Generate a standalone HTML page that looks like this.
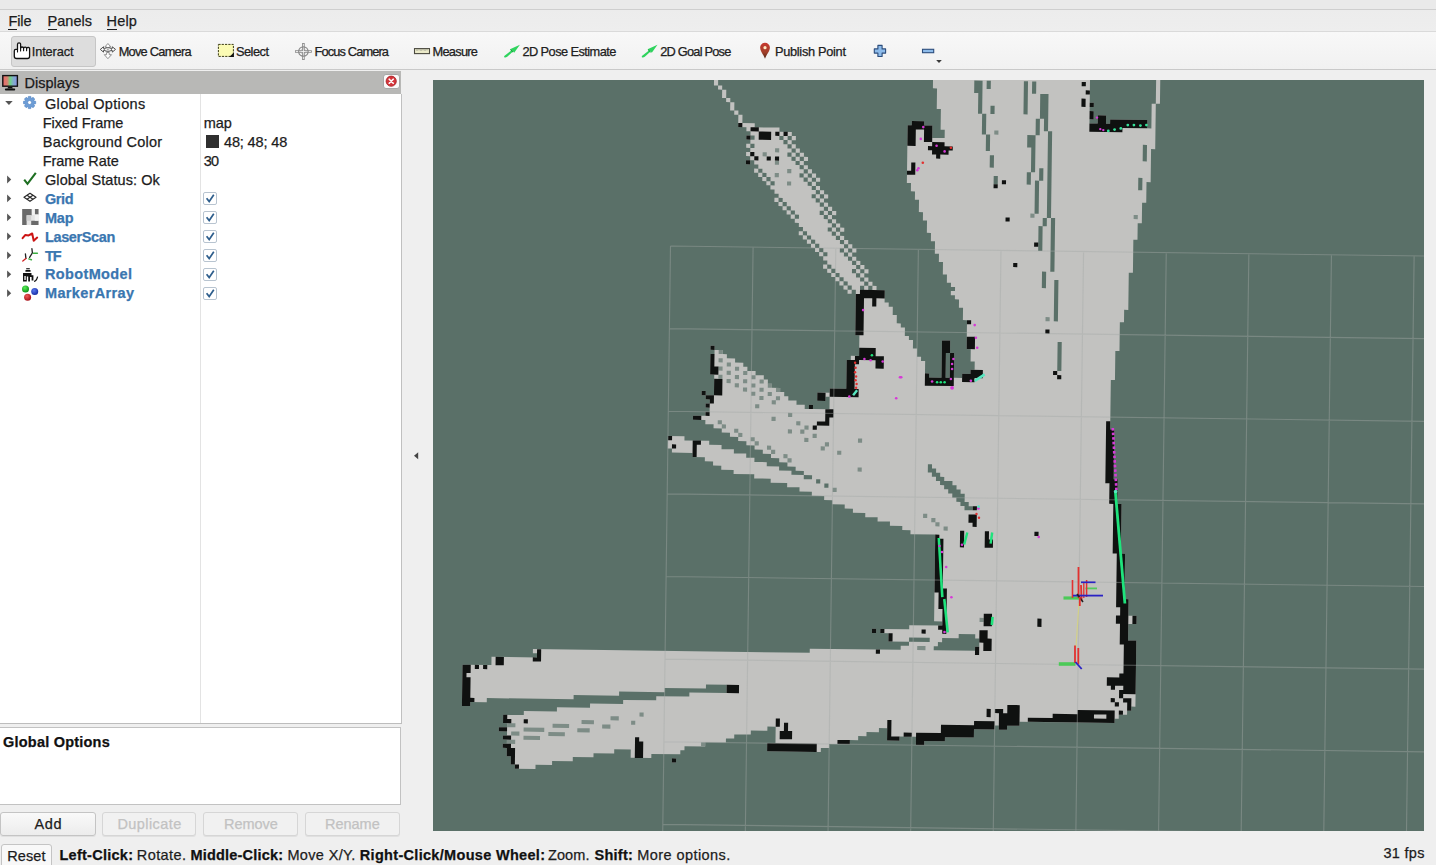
<!DOCTYPE html>
<html><head><meta charset="utf-8"><title>RViz</title>
<style>
html,body{margin:0;padding:0;}
body{width:1436px;height:865px;overflow:hidden;background:#efefef;position:relative;
 font-family:"Liberation Sans",sans-serif;}
.t{position:absolute;white-space:nowrap;line-height:20px;height:20px;-webkit-text-stroke:0.25px currentColor;}
.a{position:absolute;}
.btn{position:absolute;box-sizing:border-box;border:1px solid #c4c4c4;border-radius:3px;
 background:linear-gradient(#f9f9f9,#ececec);box-shadow:0 1px 0 #e0e0e0;}
.cb{position:absolute;box-sizing:border-box;width:14px;height:13px;left:203px;border:1px solid #b8c4d0;border-radius:2px;background:#fff;}
u{text-decoration:none;border-bottom:1.5px solid #1c1c1c;}
</style></head>
<body>
<div class="a" style="left:0;top:0;width:1436px;height:9px;background:#eaeaea"></div>
<div class="a" style="left:0;top:9px;width:1436px;height:1px;background:#cfcfcf"></div>
<div class="a" style="left:0;top:10px;width:1436px;height:21px;background:linear-gradient(#ececec,#eeeeee)"></div>
<div class="a" style="left:0;top:31px;width:1436px;height:1px;background:#dadada"></div>
<div class="a" style="left:0;top:32px;width:1436px;height:37px;background:linear-gradient(#f8f8f8,#f1f1f1)"></div>
<div class="a" style="left:0;top:69px;width:1436px;height:1px;background:#c9c9c9"></div>
<div class="t" style="left:8.40px;top:11.33px;font-size:14.5px;letter-spacing:0.000px;color:#1c1c1c;letter-spacing:-0.1px;"><u>F</u>ile</div>
<div class="t" style="left:47.60px;top:11.33px;font-size:14.5px;letter-spacing:0.000px;color:#1c1c1c;letter-spacing:0;"><u>P</u>anels</div>
<div class="t" style="left:106.50px;top:11.33px;font-size:14.5px;letter-spacing:0.000px;color:#1c1c1c;letter-spacing:0.2px;"><u>H</u>elp</div>
<div class="a" style="left:11px;top:36px;width:85px;height:30.5px;box-sizing:border-box;border:1px solid #c6c6c6;border-radius:3px;background:#dddddd"></div>
<div class="t" style="left:31.80px;top:42.31px;font-size:12.8px;letter-spacing:-0.141px;color:#202020;">Interact</div>
<div class="t" style="left:118.70px;top:42.31px;font-size:12.8px;letter-spacing:-0.748px;color:#202020;">Move Camera</div>
<div class="t" style="left:236.00px;top:42.31px;font-size:12.8px;letter-spacing:-0.515px;color:#202020;">Select</div>
<div class="t" style="left:314.50px;top:42.31px;font-size:12.8px;letter-spacing:-0.858px;color:#202020;">Focus Camera</div>
<div class="t" style="left:432.50px;top:42.31px;font-size:12.8px;letter-spacing:-0.717px;color:#202020;">Measure</div>
<div class="t" style="left:522.40px;top:42.31px;font-size:12.8px;letter-spacing:-0.563px;color:#202020;">2D Pose Estimate</div>
<div class="t" style="left:660.30px;top:42.31px;font-size:12.8px;letter-spacing:-0.790px;color:#202020;">2D Goal Pose</div>
<div class="t" style="left:775.00px;top:42.31px;font-size:12.8px;letter-spacing:-0.310px;color:#202020;">Publish Point</div>
<div class="a" style="left:0;top:71px;width:401px;height:22.5px;background:#b8b8b6"></div>
<div class="t" style="left:24.60px;top:73.13px;font-size:14.5px;letter-spacing:0.001px;color:#1a1a1a;">Displays</div>
<div class="a" style="left:0;top:93.5px;width:401px;height:629.5px;background:#fff;border-right:1px solid #c0c0c0;border-bottom:1px solid #bdbdbd"></div>
<div class="a" style="left:200px;top:93.5px;width:1px;height:629.5px;background:#e3e3e3"></div>
<div class="a" style="left:383px;top:73.5px;width:16.5px;height:15.5px;box-sizing:border-box;border:1px solid #a8a8a8;border-radius:3px;background:#fafafa"></div>
<div class="t" style="left:45.00px;top:93.93px;font-size:14.5px;letter-spacing:0.330px;color:#1c1c1c;">Global Options</div>
<div class="t" style="left:42.80px;top:112.88px;font-size:14.5px;letter-spacing:-0.088px;color:#1c1c1c;">Fixed Frame</div>
<div class="t" style="left:42.80px;top:131.83px;font-size:14.5px;letter-spacing:0.209px;color:#1c1c1c;">Background Color</div>
<div class="t" style="left:42.80px;top:150.78px;font-size:14.5px;letter-spacing:-0.072px;color:#1c1c1c;">Frame Rate</div>
<div class="t" style="left:45.00px;top:169.73px;font-size:14.5px;letter-spacing:0.073px;color:#1c1c1c;">Global Status: Ok</div>
<div class="t" style="left:45.00px;top:188.68px;font-size:14.5px;letter-spacing:-0.436px;color:#3a76b0;font-weight:bold;">Grid</div>
<div class="t" style="left:45.00px;top:207.63px;font-size:14.5px;letter-spacing:-0.251px;color:#3a76b0;font-weight:bold;">Map</div>
<div class="t" style="left:45.00px;top:226.58px;font-size:14.5px;letter-spacing:-0.381px;color:#3a76b0;font-weight:bold;">LaserScan</div>
<div class="t" style="left:45.00px;top:245.53px;font-size:14.5px;letter-spacing:-1.115px;color:#3a76b0;font-weight:bold;">TF</div>
<div class="t" style="left:45.00px;top:264.48px;font-size:14.5px;letter-spacing:0.360px;color:#3a76b0;font-weight:bold;">RobotModel</div>
<div class="t" style="left:45.00px;top:283.43px;font-size:14.5px;letter-spacing:0.356px;color:#3a76b0;font-weight:bold;">MarkerArray</div>
<div class="t" style="left:203.70px;top:112.88px;font-size:14.5px;letter-spacing:-0.004px;color:#1c1c1c;">map</div>
<div class="t" style="left:224.00px;top:131.83px;font-size:14.5px;letter-spacing:-0.144px;color:#1c1c1c;">48; 48; 48</div>
<div class="t" style="left:203.70px;top:150.78px;font-size:14.5px;letter-spacing:-0.829px;color:#1c1c1c;">30</div>
<div class="a" style="left:206px;top:135.3px;width:13px;height:12.5px;background:#2f2f2f"></div>
<div class="cb" style="top:191.9px"><svg width="12" height="11" viewBox="0 0 12 11" style="position:absolute;left:0;top:0"><path d="M2.6 5.2 L5.2 8.6 L9.8 1.8" fill="none" stroke="#2d5d8c" stroke-width="1.7"/></svg></div>
<div class="cb" style="top:210.9px"><svg width="12" height="11" viewBox="0 0 12 11" style="position:absolute;left:0;top:0"><path d="M2.6 5.2 L5.2 8.6 L9.8 1.8" fill="none" stroke="#2d5d8c" stroke-width="1.7"/></svg></div>
<div class="cb" style="top:229.8px"><svg width="12" height="11" viewBox="0 0 12 11" style="position:absolute;left:0;top:0"><path d="M2.6 5.2 L5.2 8.6 L9.8 1.8" fill="none" stroke="#2d5d8c" stroke-width="1.7"/></svg></div>
<div class="cb" style="top:248.8px"><svg width="12" height="11" viewBox="0 0 12 11" style="position:absolute;left:0;top:0"><path d="M2.6 5.2 L5.2 8.6 L9.8 1.8" fill="none" stroke="#2d5d8c" stroke-width="1.7"/></svg></div>
<div class="cb" style="top:267.8px"><svg width="12" height="11" viewBox="0 0 12 11" style="position:absolute;left:0;top:0"><path d="M2.6 5.2 L5.2 8.6 L9.8 1.8" fill="none" stroke="#2d5d8c" stroke-width="1.7"/></svg></div>
<div class="cb" style="top:286.7px"><svg width="12" height="11" viewBox="0 0 12 11" style="position:absolute;left:0;top:0"><path d="M2.6 5.2 L5.2 8.6 L9.8 1.8" fill="none" stroke="#2d5d8c" stroke-width="1.7"/></svg></div>
<div class="a" style="left:0;top:727px;width:401px;height:77.5px;box-sizing:border-box;background:#fff;border:1px solid #c2c2c2;border-left:none"></div>
<div class="t" style="left:3.00px;top:731.63px;font-size:14.5px;letter-spacing:0.214px;color:#111;font-weight:bold;">Global Options</div>
<div class="btn" style="left:0.4px;top:811.5px;width:95.3px;height:24px;"></div>
<div class="t" style="left:34.50px;top:814.13px;font-size:14.5px;letter-spacing:0.650px;color:#1c1c1c;">Add</div>
<div class="btn" style="left:102.4px;top:811.5px;width:94.0px;height:24px;border-color:#d6d6d6;background:#f1f1f1;"></div>
<div class="t" style="left:117.40px;top:814.13px;font-size:14.5px;letter-spacing:0.431px;color:#c2c2c2;">Duplicate</div>
<div class="btn" style="left:203px;top:811.5px;width:94.7px;height:24px;border-color:#d6d6d6;background:#f1f1f1;"></div>
<div class="t" style="left:224.00px;top:814.13px;font-size:14.5px;letter-spacing:-0.039px;color:#c2c2c2;">Remove</div>
<div class="btn" style="left:304.8px;top:811.5px;width:95.1px;height:24px;border-color:#d6d6d6;background:#f1f1f1;"></div>
<div class="t" style="left:325.00px;top:814.13px;font-size:14.5px;letter-spacing:-0.022px;color:#c2c2c2;">Rename</div>
<div class="btn" style="left:1px;top:843.5px;width:51.2px;height:30px;background:#f8f8f8"></div>
<div class="t" style="left:7.30px;top:845.53px;font-size:14.5px;letter-spacing:0.080px;color:#1c1c1c;">Reset</div>
<div class="t" style="left:59.50px;top:844.93px;font-size:14.5px;letter-spacing:0.260px;color:#111;font-weight:bold;">Left-Click:</div>
<div class="t" style="left:136.80px;top:844.93px;font-size:14.5px;letter-spacing:0.408px;color:#1c1c1c;">Rotate.</div>
<div class="t" style="left:190.50px;top:844.93px;font-size:14.5px;letter-spacing:0.189px;color:#111;font-weight:bold;">Middle-Click:</div>
<div class="t" style="left:287.40px;top:844.93px;font-size:14.5px;letter-spacing:0.360px;color:#1c1c1c;">Move X/Y.</div>
<div class="t" style="left:359.80px;top:844.93px;font-size:14.5px;letter-spacing:0.311px;color:#111;font-weight:bold;">Right-Click/Mouse Wheel:</div>
<div class="t" style="left:547.90px;top:844.93px;font-size:14.5px;letter-spacing:0.152px;color:#1c1c1c;">Zoom.</div>
<div class="t" style="left:594.50px;top:844.93px;font-size:14.5px;letter-spacing:0.251px;color:#111;font-weight:bold;">Shift:</div>
<div class="t" style="left:637.30px;top:844.93px;font-size:14.5px;letter-spacing:0.429px;color:#1c1c1c;">More options.</div>
<div class="t" style="left:1383.40px;top:842.63px;font-size:14.5px;letter-spacing:0.320px;color:#1c1c1c;">31 fps</div>
<svg class="a" style="left:412px;top:450px" width="8" height="12" viewBox="0 0 8 12"><path d="M6.2 2.3 L2 5.8 L6.2 9.3 Z" fill="#444"/></svg>
<svg class="a" style="left:0;top:0;pointer-events:none" width="1436" height="865" viewBox="0 0 1436 865">
<g transform="translate(13.6 42.4)" fill="#fff" stroke="#111" stroke-width="1.3" stroke-linejoin="round" stroke-linecap="round"><path d="M3.9 7V2a1.55 1.55 0 0 1 3.1 0V5.9a1.5 1.3 0 0 1 3 0a1.5 1.3 0 0 1 3 .2a1.5 1.3 0 0 1 3 .5V13.8Q16 16.1 13.8 16.1H3Q.7 16.1 .7 13.8V8.6Q.7 7 2.2 7Z"/><path d="M7 5.9V8.6M10 5.9V8.4M13 6.1V8.4M3.9 7V9.6" fill="none" stroke-width="1.1"/></g>
<g transform="translate(99.9 43.1)" stroke-width="1" stroke-linejoin="round"><path d="M8 .4L11 3.8H9.3V6H6.7V3.8H5Z M8 15.6L11.6 11.6H9.3V9.4H6.7V11.6H4.4Z" fill="#fff" stroke="#909090"/><path d="M.4 6.3L3.6 3.7V5.3H6.2V7.4H3.6V9Z M15.6 6.3L12.4 3.7V5.3H9.8V7.4H12.4V9Z" fill="#fff" stroke="#4c4c4c"/><ellipse cx="8" cy="6.4" rx="3.6" ry="1.9" fill="#f4f4f4" stroke="#555"/><circle cx="8" cy="6.4" r="1" fill="#aaa" stroke="none"/></g>
<rect x="218.4" y="44.4" width="15" height="12" fill="#fbfbb4" stroke="#3c3c14" stroke-width="1" stroke-dasharray="2.2 1.1"/>
<path d="M233.9 52.6V56.9H229.2Z" fill="#111"/>
<g transform="translate(303.4 51.5)" fill="none"><path d="M-8.4 0H8.4M0 -8.4V8.4" stroke="#8a8a8a" stroke-width="2.6"/><path d="M-7.6 0H7.6M0 -7.6V7.6" stroke="#f4f4f4" stroke-width="0.9"/><circle r="4.7" stroke="#868686" stroke-width="1.2"/><circle r="2.7" stroke="#9a9a9a" stroke-width="1" stroke-dasharray="1.2 0.9"/></g>
<rect x="414.5" y="48.6" width="15" height="5" fill="#ecebca" stroke="#4b4a40" stroke-width="1.1"/>
<path d="M417 49.2V51M419 49.2V50.4M421 49.2V51M423 49.2V50.4M425 49.2V51M427 49.2V50.4" stroke="#8a8a80" stroke-width="0.8"/>
<g transform="translate(504.0 44.6)"><path d="M.3 12.6Q-.3 11.6 .9 10.8L7 6.2L6 4.6L15.9 .2L10.2 8.2L9 6.9L3.2 12.2Q1.4 13.4 .3 12.6Z" fill="#2fd45e"/><path d="M6.6 5.2L9 7.6" stroke="#1a9a3c" stroke-width="1"/></g>
<g transform="translate(641.6 44.6)"><path d="M.3 12.6Q-.3 11.6 .9 10.8L7 6.2L6 4.6L15.9 .2L10.2 8.2L9 6.9L3.2 12.2Q1.4 13.4 .3 12.6Z" fill="#2fd45e"/><path d="M6.6 5.2L9 7.6" stroke="#1a9a3c" stroke-width="1"/></g>
<defs><linearGradient id="pin" x1="0" y1="0" x2="0" y2="1"><stop offset="0" stop-color="#c8392f"/><stop offset=".6" stop-color="#a2402a"/><stop offset="1" stop-color="#4a2414"/></linearGradient><linearGradient id="scr" x1="0" y1="0" x2="1" y2="0"><stop offset="0" stop-color="#e86a6a"/><stop offset=".3" stop-color="#d88070"/><stop offset=".5" stop-color="#6fd484"/><stop offset=".7" stop-color="#80b0c8"/><stop offset="1" stop-color="#8a8ee6"/></linearGradient><radialGradient id="sg" cx=".4" cy=".35" r=".7"><stop offset="0" stop-color="#58f058"/><stop offset="1" stop-color="#0a8a14"/></radialGradient><radialGradient id="sb" cx=".4" cy=".35" r=".7"><stop offset="0" stop-color="#5a7af0"/><stop offset="1" stop-color="#1228a0"/></radialGradient><radialGradient id="sr" cx=".4" cy=".35" r=".7"><stop offset="0" stop-color="#f05a5a"/><stop offset="1" stop-color="#a40c14"/></radialGradient></defs>
<path d="M765 58.8C763.6 54.6 760.1 51.6 760.1 47.6A4.9 4.9 0 0 1 769.9 47.6C769.9 51.6 766.4 54.6 765 58.8Z" fill="url(#pin)"/>
<circle cx="765" cy="47.7" r="1.6" fill="#ffe9c4"/>
<path d="M877.9 45.4H882.1V48.9H885.6V53.1H882.1V56.5H877.9V53.1H874.3V48.9H877.9Z" fill="#8dbbea" stroke="#2c4d7c" stroke-width="1.1" stroke-linejoin="round"/>
<rect x="922.5" y="49.3" width="11.2" height="3.4" fill="#8dbbea" stroke="#2c4d7c" stroke-width="1.1"/>
<path d="M936.2 60.1H941.8L939 62.9Z" fill="#3a3a3a"/>
<rect x="2.8" y="75.6" width="14.6" height="10.6" fill="url(#scr)" stroke="#111" stroke-width="1.4"/>
<path d="M8 87H12.2L12.8 88.6H7.4Z" fill="#111"/><rect x="4.9" y="88.6" width="10.3" height="1.8" rx=".9" fill="#111"/>
<circle cx="391.2" cy="81.2" r="5.1" fill="#d4353b" stroke="#a32025" stroke-width=".8"/><path d="M389.2 79.2L393.2 83.2M393.2 79.2L389.2 83.2" stroke="#fff" stroke-width="1.6" stroke-linecap="round"/>
<path d="M5.2 101.1H12.7L8.95 105Z" fill="#555"/>
<path d="M7.1 175.6L11.2 179.5L7.1 183.4Z" fill="#555"/>
<path d="M7.1 194.5L11.2 198.4L7.1 202.3Z" fill="#555"/>
<path d="M7.1 213.5L11.2 217.4L7.1 221.3Z" fill="#555"/>
<path d="M7.1 232.4L11.2 236.3L7.1 240.2Z" fill="#555"/>
<path d="M7.1 251.4L11.2 255.3L7.1 259.2Z" fill="#555"/>
<path d="M7.1 270.4L11.2 274.2L7.1 278.1Z" fill="#555"/>
<path d="M7.1 289.3L11.2 293.2L7.1 297.1Z" fill="#555"/>
<path d="M35.68 101.27L35.68 103.73L33.95 103.99L33.73 104.52L34.77 105.93L33.03 107.67L31.62 106.63L31.09 106.85L30.83 108.58L28.37 108.58L28.11 106.85L27.58 106.63L26.17 107.67L24.43 105.93L25.47 104.52L25.25 103.99L23.52 103.73L23.52 101.27L25.25 101.01L25.47 100.48L24.43 99.07L26.17 97.33L27.58 98.37L28.11 98.15L28.37 96.42L30.83 96.42L31.09 98.15L31.62 98.37L33.03 97.33L34.77 99.07L33.73 100.48L33.95 101.01Z M31.60 102.5A2 2 0 1 0 27.60 102.5A2 2 0 1 0 31.60 102.5Z" fill="#6d9dd6" fill-rule="evenodd" stroke="#4f82c0" stroke-width=".6"/>
<path d="M24.2 179.6L27.5 183.8L35.8 172.8" fill="none" stroke="#1e6f22" stroke-width="2.1" stroke-linejoin="miter"/>
<g fill="none" stroke="#2a2a2a" stroke-width="1.2" stroke-linejoin="round"><path d="M24 197.3L30 193.3L36 197.3L30 201.3Z"/><path d="M27 195.3L33 199.3M33 195.3L27 199.3"/></g>
<g><rect x="22.2" y="209" width="16.3" height="16" fill="#e4e4e4"/><path d="M22.2 209H31.8V215.3H26.6V225H22.2Z M34.8 209H38.5V214.6H34.8Z M31.2 220.8H38.5V225H31.2Z" fill="#6a6a6a"/><path d="M26.6 215.3H31.2V220.8H26.6Z" fill="#cfcfcf"/><path d="M31.8 209H34.8V215H31.8Z M34.8 214.6H38.5V220.8H34.8Z" fill="#f2f2f2"/></g>
<path d="M22.6 238.2L25.4 234.9L28.6 235.4L32.2 233.5L33.7 240.8L37.2 237.6" fill="none" stroke="#cc1414" stroke-width="2" stroke-linejoin="round" stroke-linecap="round"/>
<g fill="none" stroke-width="1.3" stroke-linecap="round"><path d="M31.9 248.7L32.4 252.8L29.6 257.4M25.4 253.8L25.9 258.4" stroke="#222"/><path d="M25.9 258.4L22.8 261" stroke="#d02020"/><path d="M33.4 253.3H37.4M28.8 258.9L31.4 259.8" stroke="#3cb040" stroke-width="1.5"/></g>
<g fill="#111" stroke="none"><rect x="26.2" y="268.2" width="3.6" height="1.1"/><rect x="25.4" y="270.1" width="5.2" height="1.6" rx=".5"/><path d="M23 273H31.5V275.2H33.4V280.6H31.6V277H30V281.6H28.2V276.4H26.8V281.6H23Z"/><path d="M34 281.4Q36.6 281 37.6 276.6" fill="none" stroke="#111" stroke-width="1.2"/></g><rect x="24.4" y="276" width="1.3" height="4" fill="#fff"/>
<circle cx="25.5" cy="288.9" r="3.5" fill="url(#sg)"/><circle cx="34.7" cy="291.5" r="3.5" fill="url(#sb)"/><circle cx="27.6" cy="297.2" r="3.5" fill="url(#sr)"/>
</svg>
<svg class="a" style="left:433px;top:80px" width="991" height="751" viewBox="433 80 991 751">
<rect x="433" y="80" width="991" height="751" fill="#5a7068"/>
<g transform="translate(670.5 246.0) rotate(0.76) scale(4.1315)">
<path fill="#c2c2c0" d="M63 -43h38v7h1v1h-1v1h1v2h-1v1h2v-2h2v2h1v-1h9v2h1v-6h1v11h-1v8h-1v5h-1v5h-1v4h-1v8h-1v9h-1v3h-1v7h-1v7h-1v12h1v12h1v6h1v12h1v11h1v4h2v2h-2v4h2v16h-1v1h-1v1h-2v1h-1v1h-23v1h-3v1h-2v-1h-1v1h-5v2h-7v1h-5v1h-2v-2h-4v1h-3v-3h-2v1h-3v1h-2v1h-2v1h-5v1h-2v1h-13v-2h2v-4h-2v1h-4v1h-4v1h-2v1h-5v1h-5v1h-1v1h-7v1h-5v-2h-4v1h-5v1h-5v1h-5v1h-4v1h-5v-1h-1v-2h-1v-2h-1v-1h1v-1h-1v-1h1v-1h-2v-1h2v-1h-1v-2h5v-1h8v-1h8v-1h8v-1h8v-1h8v-1h9v-2h-5v1h-10v1h-11v1h-11v1h-21v1h-4v1h-2v-10h7v-2h11v-1h-1v-1h67v-1h22v-1h2v-1h5v-1h-5v1h-5v-2h-2v-1h7v-1h8v-1h-2v-21h-6v-1h-2v-1h-3v-1h-3v-1h-3v-1h-3v-1h-2v-1h-3v-1h-2v-1h-3v-1h-3v-1h-3v-1h-4v-1h-4v-1h-5v-1h-3v-1h-2v-1h-2v-1h-3v-1h-5v-1h-1v-3h4v1h6v1h3v1h3v1h3v1h2v1h3v1h3v1h3v1h3v1h2v-1h-2v-1h-2v-1h-2v-1h-2v-1h-2v-1h-2v-1h-2v-1h-2v-1h-2v-1h-2v-1h-2v-1h-2v-1h-2v-1h-3v-1h3v-1h1v-1h-1v-1h1v-1h-1v-1h2v-5h-1v-5h1v-1h2v1h1v1h2v1h2v1h1v1h2v1h2v1h1v1h1v1h2v1h1v1h1v1h2v1h2v1h1v-1h1v1h4v-3h-1v1h-2v-2h3v-1h4v-7h1v-1h2v-5h-1v-11h-1v1h-1v-1h1v-1h-1v1h-1v-1h1v-1h-1v1h-1v-1h1v-1h-1v1h-1v-1h1v-1h-1v1h-1v-1h1v-1h-1v1h-1v-1h1v-1h-1v1h-1v-1h1v-1h-1v-1h1v-1h-1v1h-1v-1h1v-1h-1v1h-1v-1h1v-1h-1v1h-1v-1h1v-1h-1v1h-1v-1h1v-1h-1v1h-1v-1h1v-1h-1v1h-1v-1h1v-1h-1v-1h-1v-1h1v-1h-1v1h-1v-1h1v-1h-1v1h-1v-1h1v-1h-1v1h-1v-1h1v-1h-1v1h-1v-1h1v-1h-1v1h-1v-1h1v-1h-1v-1h-1v-1h1v-1h-1v1h-1v-1h1v-1h-1v1h-1v-1h1v-1h-1v1h-1v-1h1v-1h-1v1h-1v-1h1v-1h-1v-1h-1v1h-1v-1h1v-1h-1v-1h1v-1h1v-1h-1v1h-1v-1h1v-1h1v-1h-1v1h-1v-1h1v-1h-1v-1h-2v-3h1v2h3v1h6v1h3v1h1v1h-1v1h1v1h1v1h1v1h1v1h-1v1h1v1h1v1h1v1h1v1h-1v1h1v1h1v1h1v1h-1v1h1v1h1v1h1v1h-1v1h1v1h1v1h1v1h-1v1h1v1h1v1h1v1h1v1h-1v1h1v1h1v1h1v1h1v1h-1v1h1v1h1v1h1v1h2v3h1v1h1v2h1v2h1v1h1v2h1v1h1v2h1v2h1v1h1v3h1v1h3v-9h2v3h1v6h2v-1h2v-1h1v-2h-1v-3h-1v-7h-1v-3h-1v-2h-1v-1h-1v-1h1v-1h-1v-1h-1v-2h-1v-3h-1v-2h-1v-3h-1v-2h-1v-3h-1v-2h-1v-3h-1v-2h-1v-2h-1v-14h1v-1h3v1h2v3h3v-2h-1v-5h-1v-5h-1zM117 -43h1v7h-1zM73 -41v3h1v5h1v5h1v4h1v-4h-1v-5h-1v-8zM77 -41h-1v2h1zM86 -41h-1v8h1zM88 -41h-1v3h1zM10 -41h1v2h1v1h1v2h1v1h1v2h1v1h-1v-1h-1v-2h-1v-1h-1v-2h-1v-1h-1zM89 -38v6h1v3h1v21h1v13h1v-13h-1v-21h-1v-9zM78 -35h-1v2h1zM89 -32h-1v4h1zM86 -28v3h1v6h1v-9zM27 -27h-1v1h1v1h1v1h1v1h1v1h1v1h1v-1h-1v-1h-1v-1h-1v-1h-1v-1h1v-1h-1v1h-1zM115 -26h-1v4h1zM29 -23h-1v1h1v1h1v1h1v1h1v1h1v1h1v1h1v-1h-1v-1h-1v-1h-1v-1h-1v-1h-1v-1h-1zM78 -23h-1v3h1zM90 -20h-1v3h1zM87 -19h-1v3h1zM32 -18h-1v1h1v1h1v1h1v1h1v1h1v1h1v-1h-1v-1h-1v-1h-1v-1h-1v-1h-1zM79 -18h-1v2h1zM114 -18h-1v3h1zM89 -17h-1v8h1zM35 -13h-1v1h1v1h1v1h1v1h1v1h1v-1h-1v-1h-1v-1h-1v-1h-1zM37 -9h-1v1h1v1h1v1h1v1h1v1h1v-1h-1v-1h-1v-1h-1v-1h-1zM91 -8h-1v2h1zM90 -6h-1v6h1zM39 -5h-1v1h1v1h1v1h1v1h1v1h1v1h1v-1h-1v-1h-1v-1h-1v-1h-1v-1h-1zM42 0h-1v1h1v1h1v1h1v1h1v1h1v1h1v-1h-1v-1h-1v-1h-1v-1h-1v-1h-1zM45 5h-1v1h1v1h1v1h1v1h1v1h1v-1h-1v-1h-1v-1h-1v-1h-1zM91 5h-1v4h1zM94 7h-1v10h1zM47 9h-1v1h1zM95 22h-1v7h1zM10 24h1v1h-1zM68 25h-1v6h1zM8 35h1v1h-1zM64 52h-1v2h1v1h1v1h1v1h1v1h1v1h1v1h1v1h1v1h1v1h2v-1h-1v-1h-1v-2h-1v-1h-1v-1h-1v-1h-2v-1h-1v-1h-1v-1h-1zM37 56h-1v1h1zM39 57h-1v1h1zM50 92h1v1h-1zM71 93v1h-4v1h-1v1h-1v1h10v-1h1v-2h-1v-1zM2 124h1v1h-1z"/>
<path fill="#7d8c86" d="M78 -29h1v1h-1zM25 -24h1v1h-1zM22 -23h1v1h-1zM25 -21h1v1h-1zM28 -19h1v1h-1zM25 -18h1v1h-1zM28 -16h1v1h-1zM87 -9h1v1h-1zM112 -9h1v1h-1zM91 16h1v1h-1zM12 25h1v1h-1zM12 27h1v1h-1zM14 28h1v1h-1zM12 29h1v1h-1zM16 29h1v1h-1zM14 30h1v1h-1zM18 30h1v1h-1zM12 31h1v1h-1zM16 31h1v1h-1zM20 31h1v1h-1zM14 32h1v1h-1zM18 32h1v1h-1zM22 32h1v1h-1zM16 33h1v1h-1zM20 33h1v1h-1zM24 33h1v1h-1zM18 34h1v1h-1zM22 34h1v1h-1zM26 34h1v1h-1zM20 35h1v1h-1zM24 35h1v1h-1zM22 36h1v1h-1zM26 36h1v1h-1v1h-1v-1h1zM21 38h1v1h-1zM29 40h1v1h-1zM25 41h1v1h-1zM12 42h1v1h1v1h-1v-1h-1zM31 42h1v1h-1zM33 43h1v1h-1v1h-1v-1h1zM16 44h1v1h1v1h-1v-1h-1zM29 44h1v1h-1zM35 45h1v1h-1zM20 46h1v1h1v1h-1v-1h-1zM33 46h1v1h-1zM46 46h1v1h-1zM38 47h1v1h-1v1h-1v-1h1zM24 48h1v1h1v1h-1v-1h-1zM41 49h1v1h-1zM28 50h1v1h1v1h-1v-1h-1zM46 53h1v1h-1zM40 58h1v1h-1zM62 64h1v1h-1zM64 65h1v1h1v1h-1v-1h-1zM67 67h1v1h-1zM76 89h1v1h-1zM61 96h2v1h-2zM-6 113h1v1h-1zM-13 114h2v1h-2zM-20 115h3v1h-3zM-8 115h1v1h-1zM-38 116h2v1h-2zM-27 116h4v1h-4zM-15 116h2v1h-2zM-34 117h5v1h-5zM-21 117h3v1h-3zM-37 118h2v1h-2zM-28 118h4v1h-4zM-34 119h4v1h-4zM-38 120h2v1h-2zM9 120h1v1h-1z"/>
<path fill="#0f1110" d="M99 -41h1v1h-1zM100 -39h1v1h-1zM99 -37h1v2h-1zM101 -36h1v1h-1zM101 -34h1v2h-1zM103 -33h2v2h1v-1h9v2h-6v1h-8v-2h2zM58 -31h3v1h2v4h3v1h2v1h-1v1h-2v1h-1v-1h-1v-1h-1v-1h1v-1h-2v-3h-2v4h-2v-5h1zM16 -30h1v1h-1zM19 -29h2v1h3v2h-3v-2h-2zM25 -28h1v1h-1zM27 -28h1v1h-1zM18 -27h1v1h-1zM19 -23h1v1h1v1h-1v-1h-1zM23 -22h1v1h-1zM25 -22h1v1h-1zM18 -21h1v1h-1zM58 -21h1v3h-2v-1h1zM80 -17h1v1h-1zM78 -16h1v1h-1zM81 -8h1v1h-1zM88 -2h1v1h-1zM83 3h1v1h-1zM46 10h6v2h-2v2h-1v-2h-2v9h-2v-10h1zM72 17h1v1h-1zM91 19h1v1h-1zM72 21h2v3h-2zM66 22h2v3h1v8h-7v-3h1v1h3zM10 24h1v1h-1zM46 24h4v2h2v3h-2v-2h-4v1h-1v6h1v2h-7v-2h4v-7h2v-1h1zM68 25h-1v6h1zM10 26h1v3h1v2h-2zM73 29h3v2h-2v1h-3v-2h2zM93 29h1v1h1v1h-1v-1h-1zM11 32h2v4h-2v2h-1v1h-1v-1h1v-1h-1v-1h2zM8 35h1v1h-1zM36 35h2v2h-2zM34 38h1v1h-1zM38 39h2v2h-1v2h-3v1h-1v-1h1v-1h2zM9 40h1v1h-1zM6 41h2v1h-2zM106 41h1v2h1v12h1v6h1v12h1v11h1v10h2v13h-3v1h2v3h-1v-2h-1v-1h-1v-2h1v-1h-2v1h-1v-1h-1v-2h3v-1h1v-7h-1v-5h-1v-2h1v-2h-1v-13h-1v-12h-1v-5h-1zM0 46h1v1h-1zM6 47h2v1h-1v3h-1zM1 48h1v1h-1zM74 62h1v1h-1zM73 64h2v3h-1v-1h-1zM71 68h1v4h-1zM77 68h1v2h1v2h-2zM89 68h1v1h-1zM65 69h1v1h1v12h1v11h-1v-1h-1v-1h1v-4h-1v-4h-1zM77 88h2v3h-2zM113 88h1v2h-1zM90 89h1v2h-1zM50 92h1v1h-1zM52 92h1v1h-1zM62 92h1v1h-1zM76 92h2v2h1v3h-2v-2h-1zM54 93h1v2h-1zM75 96h1v2h-1zM51 97h1v1h-1zM-31 98h1v3h-2v-1h1zM-41 100h2v2h-2zM-49 102h2v2h-1v1h1v5h1v1h-1v1h-2zM-46 102h1v1h-1zM-44 102h1v1h-1zM15 106h3v2h-3zM108 108h1v1h1v1h-1v-1h-1zM83 110h3v5h-3v1h-2v-4h-1v-1h2v1h1zM78 111h1v2h-1zM100 111h9v3h-21v-1h6v-1h6zM104 112v1h3v-1zM110 111h1v1h-1zM-39 114h1v1h1v1h-2zM27 114h1v2h-1zM54 114h1v4h2v1h-3zM75 114h5v2h-5v2h-7v1h-5v1h-2v-3h6v-2h8zM-34 115h1v1h-1zM29 115h1v2h1v2h-3v-2h1zM-40 117h2v1h-2zM58 117h2v1h-2zM-39 119h2v1h-2zM-7 119h1v1h1v4h-2zM42 119h3v1h-3zM25 120h12v2h-12zM-39 121h2v1h1v4h1v1h-1v-1h-1v-2h-1v-2h-1zM2 124h1v1h-1z"/>
</g>
<g transform="translate(670.5 246.0) rotate(0.76)" stroke="#a4aaa8" stroke-opacity="0.42" stroke-width="1.15" fill="none">
<path d="M0.0 0V826.3M0 0.0H826.3M82.6 0V826.3M0 82.6H826.3M165.3 0V826.3M0 165.3H826.3M247.9 0V826.3M0 247.9H826.3M330.5 0V826.3M0 330.5H826.3M413.1 0V826.3M0 413.1H826.3M495.8 0V826.3M0 495.8H826.3M578.4 0V826.3M0 578.4H826.3M661.0 0V826.3M0 661.0H826.3M743.7 0V826.3M0 743.7H826.3M826.3 0V826.3M0 826.3H826.3"/>
</g>
<line x1="1112.8" y1="428.0" x2="1116.4" y2="490.0" stroke="#d63ad6" stroke-width="2.6" stroke-dasharray="2.6 2"/>
<line x1="1115.4" y1="492.0" x2="1124.9" y2="603.5" stroke="#1fe37c" stroke-width="2.8" />
<g fill="#58e6c0"><circle cx="1115.6" cy="491.5" r="1.8"/></g>
<line x1="938.8" y1="538.0" x2="942.3" y2="597.2" stroke="#1fe37c" stroke-width="2.6" />
<line x1="944.3" y1="599.0" x2="947.7" y2="632.4" stroke="#1fe37c" stroke-width="2.6" />
<line x1="967.3" y1="532.5" x2="964.2" y2="544.5" stroke="#1fe37c" stroke-width="2.4" />
<line x1="992.2" y1="532.5" x2="990.6" y2="543.6" stroke="#1fe37c" stroke-width="2.4" />
<line x1="992.6" y1="616.8" x2="991.8" y2="625.0" stroke="#1fe37c" stroke-width="2.6" />
<g fill="#d63ad6"><circle cx="962.0" cy="544.7" r="1.3"/><circle cx="1038.7" cy="537.0" r="1.3"/><circle cx="946.2" cy="567.0" r="1.3"/><circle cx="951.4" cy="597.2" r="1.3"/><circle cx="978.4" cy="508.4" r="1.3"/><circle cx="942.0" cy="552.0" r="1.3"/><circle cx="939.5" cy="546.0" r="1.3"/><circle cx="944.5" cy="632.0" r="1.3"/></g>
<g fill="#e2312f"><circle cx="979.0" cy="517.7" r="1.2"/><circle cx="976.5" cy="514.0" r="1.2"/></g>
<g fill="#58e6c0"><circle cx="978.6" cy="506.6" r="1.3"/></g>
<g fill="#d63ad6"><circle cx="923.3" cy="127.1" r="1.3"/><circle cx="920.8" cy="138.9" r="1.3"/><circle cx="936.6" cy="145.7" r="1.3"/><circle cx="944.6" cy="151.4" r="1.3"/><circle cx="918.5" cy="168.2" r="1.3"/><circle cx="917.3" cy="170.2" r="1.3"/></g>
<g fill="#e2312f"><circle cx="950.9" cy="147.7" r="1.3"/><circle cx="922.8" cy="162.7" r="1.3"/></g>
<g fill="#35e39a"><circle cx="1108.3" cy="130.9" r="1.4"/><circle cx="1114.6" cy="129.6" r="1.4"/><circle cx="1120.8" cy="128.4" r="1.4"/><circle cx="1127.8" cy="125.1" r="1.4"/><circle cx="1133.9" cy="125.1" r="1.4"/><circle cx="1140.4" cy="125.6" r="1.4"/><circle cx="1146.4" cy="125.1" r="1.4"/></g>
<g fill="#d63ad6"><circle cx="1097.0" cy="117.6" r="1.2"/><circle cx="1103.3" cy="130.1" r="1.2"/><circle cx="1100.3" cy="129.1" r="1.2"/></g>
<g fill="#d63ad6"><circle cx="863.1" cy="310.1" r="1.3"/><circle cx="864.4" cy="359.0" r="1.3"/><circle cx="870.6" cy="360.2" r="1.3"/><circle cx="882.7" cy="361.5" r="1.3"/><circle cx="901.2" cy="377.3" r="1.3"/><circle cx="896.2" cy="398.3" r="1.3"/><circle cx="849.3" cy="396.6" r="1.3"/><circle cx="932.1" cy="381.5" r="1.3"/><circle cx="974.7" cy="325.1" r="1.3"/><circle cx="975.9" cy="337.7" r="1.3"/><circle cx="977.2" cy="347.7" r="1.3"/><circle cx="953.4" cy="359.0" r="1.3"/><circle cx="952.1" cy="364.0" r="1.3"/><circle cx="952.1" cy="369.0" r="1.3"/><circle cx="950.9" cy="379.0" r="1.3"/><circle cx="970.9" cy="380.8" r="1.3"/></g>
<g fill="#d63ad6"><circle cx="952.1" cy="387.8" r="1.9"/></g>
<g fill="#e2312f"><circle cx="855.1" cy="362.7" r="1.2"/><circle cx="855.6" cy="367.7" r="1.2"/><circle cx="855.1" cy="372.3" r="1.2"/><circle cx="856.1" cy="376.5" r="1.2"/><circle cx="855.6" cy="380.3" r="1.2"/><circle cx="856.6" cy="384.0" r="1.2"/><circle cx="856.1" cy="387.8" r="1.2"/></g>
<g fill="#1fe37c"><circle cx="871.9" cy="355.2" r="1.3"/><circle cx="937.1" cy="382.3" r="1.3"/><circle cx="940.8" cy="382.3" r="1.3"/><circle cx="944.6" cy="382.3" r="1.3"/></g>
<line x1="853.1" y1="395.3" x2="857.1" y2="390.3" stroke="#58e6c0" stroke-width="2.4" />
<line x1="974.7" y1="380.8" x2="984.7" y2="374.3" stroke="#58e6c0" stroke-width="2.6" />
<g fill="#d63ad6"><circle cx="900.0" cy="377.3" r="1.3"/></g>
<line x1="1079.0" y1="603.0" x2="1076.0" y2="647.0" stroke="#d2d088" stroke-width="1.2" />
<line x1="1063.5" y1="598.0" x2="1080.0" y2="598.0" stroke="#3fcb4c" stroke-width="3.2" stroke-opacity="0.9"/>
<line x1="1085.5" y1="588.4" x2="1097.0" y2="588.4" stroke="#3fcb4c" stroke-width="1.8" stroke-opacity="0.85"/>
<line x1="1078.5" y1="567.0" x2="1078.5" y2="598.0" stroke="#e2312f" stroke-width="1.8" />
<line x1="1072.5" y1="580.0" x2="1072.5" y2="598.0" stroke="#e2312f" stroke-width="1.6" />
<line x1="1081.0" y1="585.0" x2="1081.6" y2="601.0" stroke="#e2312f" stroke-width="1.8" />
<line x1="1083.8" y1="583.0" x2="1083.8" y2="598.0" stroke="#e2312f" stroke-width="1.3" />
<line x1="1086.6" y1="580.0" x2="1086.6" y2="597.0" stroke="#e2312f" stroke-width="1.5" />
<line x1="1081.0" y1="582.3" x2="1095.5" y2="582.3" stroke="#2a22c4" stroke-width="1.7" />
<line x1="1073.0" y1="595.6" x2="1103.0" y2="595.6" stroke="#2a22c4" stroke-width="1.8" />
<line x1="1077.0" y1="594.0" x2="1083.0" y2="602.0" stroke="#222" stroke-width="1.5" />
<line x1="1079.8" y1="597.0" x2="1079.8" y2="606.0" stroke="#e2312f" stroke-width="1.8" />
<line x1="1058.8" y1="664.0" x2="1075.5" y2="664.0" stroke="#3fcb4c" stroke-width="3.6" stroke-opacity="0.9"/>
<line x1="1075.0" y1="645.5" x2="1075.0" y2="663.0" stroke="#e2312f" stroke-width="1.8" />
<line x1="1078.3" y1="648.0" x2="1078.3" y2="664.0" stroke="#e2312f" stroke-width="1.8" />
<line x1="1075.5" y1="662.0" x2="1081.7" y2="669.0" stroke="#2a22c4" stroke-width="1.8" />
</svg>
</body></html>
